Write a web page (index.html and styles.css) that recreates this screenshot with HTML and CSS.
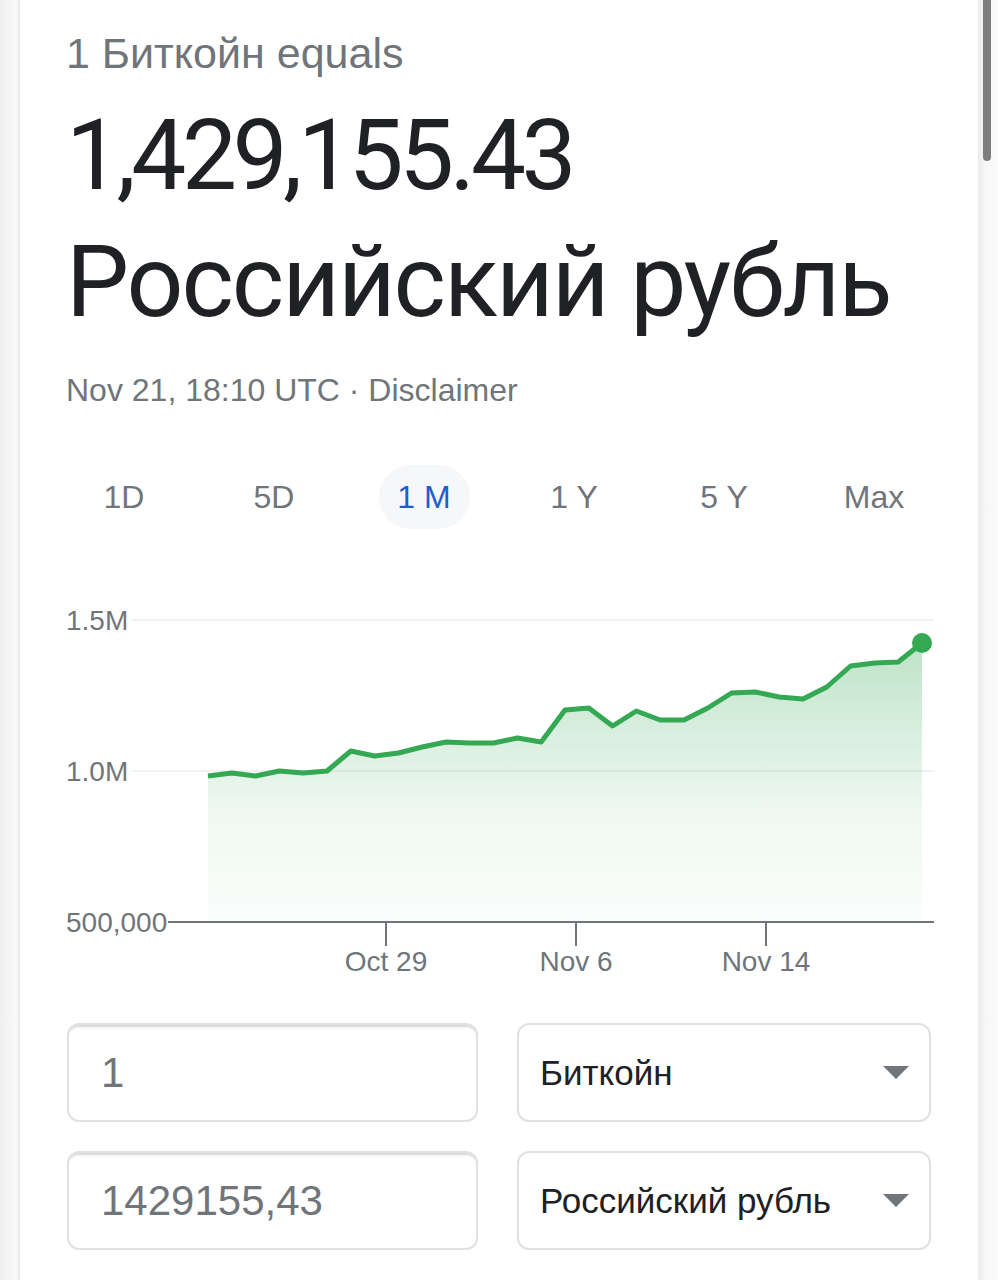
FILE: index.html
```html
<!DOCTYPE html>
<html lang="ru">
<head>
  <meta charset="UTF-8" />
  <meta name="viewport" content="width=device-width, initial-scale=1.0"/>
  <title>Биткойн — Российский рубль</title>
  <link rel="stylesheet" href="styles.css">
</head>
<body>
  <div class="page">
    <div class="gutter-left"></div>

    <div class="card">
      <div class="eyebrow">1 Биткойн equals</div>
      <div class="rate">1,429,155.43</div>
      <div class="currency">Российский рубль</div>
      <div class="meta">Nov 21, 18:10 UTC · Disclaimer</div>

      <div class="tabs">
        <div class="tab"><span>1D</span></div>
        <div class="tab"><span>5D</span></div>
        <div class="tab"><span class="active">1 M</span></div>
        <div class="tab"><span>1 Y</span></div>
        <div class="tab"><span>5 Y</span></div>
        <div class="tab"><span>Max</span></div>
      </div>

      <!-- chart uses page coordinates (viewBox offset by card position) -->
      <svg class="chart" viewBox="20 560 958 440" width="958" height="440">
        <defs>
          <linearGradient id="fill" x1="0" y1="0" x2="0" y2="1">
            <stop offset="0" stop-color="#34a853" stop-opacity="0.32"/>
            <stop offset="0.6" stop-color="#34a853" stop-opacity="0.08"/>
            <stop offset="1" stop-color="#34a853" stop-opacity="0.02"/>
          </linearGradient>
        </defs>
        <g class="grid">
          <line x1="132" y1="620" x2="934" y2="620"/>
          <line x1="132" y1="771" x2="934" y2="771"/>
        </g>
        <path id="area" fill="url(#fill)" d=""/>
        <polyline id="line" class="line" points=""/>
        <circle id="dot" r="10" fill="#34a853" cx="922" cy="643"/>
        <g class="axis">
          <line x1="168" y1="922" x2="934" y2="922"/>
          <line x1="386" y1="922" x2="386" y2="946"/>
          <line x1="576" y1="922" x2="576" y2="946"/>
          <line x1="766" y1="922" x2="766" y2="946"/>
        </g>
        <g class="labels">
          <text x="66" y="630">1.5M</text>
          <text x="66" y="781">1.0M</text>
          <text x="66" y="932">500,000</text>
          <text x="386" y="971" text-anchor="middle">Oct 29</text>
          <text x="576" y="971" text-anchor="middle">Nov 6</text>
          <text x="766" y="971" text-anchor="middle">Nov 14</text>
        </g>
      </svg>

      <div class="converter">
        <div class="field amount">1</div>
        <div class="field select">Биткойн<span class="caret"></span></div>
        <div class="field amount">1429155,43</div>
        <div class="field select">Российский рубль<span class="caret"></span></div>
      </div>
    </div>

    <div class="gutter-right">
      <div class="thumb"></div>
    </div>
  </div>

  <script>
    const values = [776, 773, 776, 771, 773, 771, 751, 756, 753, 747, 742, 743, 743, 738, 742,
                    710, 708, 726, 711, 720, 720, 708, 693, 692, 697, 699, 687, 666, 663, 662, 643];
    const x0 = 208, step = (922 - 208) / (values.length - 1);
    const pts = values.map((y, i) => `${(x0 + i * step).toFixed(1)},${y}`);

    document.getElementById('line').setAttribute('points', pts.join(' '));
    document.getElementById('area').setAttribute('d',
      `M${x0},922 L${pts.join(' L')} L922,922 Z`);
  </script>
</body>
</html>
```

FILE: styles.css
```css
body {
  margin: 0;
  background: #fff;
  font-family: "Liberation Sans", Arial, sans-serif;
}
.page {
  display: flex;
  min-height: 1280px;
  overflow: hidden;
}
.gutter-left {
  width: 20px;
  flex: none;
  background: linear-gradient(to right, #efefef, #fafafa 80%, #e6e6e6);
}
.gutter-right {
  width: 20px;
  flex: none;
  background: linear-gradient(to right, #ececec, #f7f7f7 40%, #fbfbfb);
}
.thumb {
  width: 8px;
  height: 161px;
  margin-left: 5px;
  background: #7d7d7d;
  border-radius: 0 0 4px 4px;
}
.card {
  flex: 1;
  min-width: 0;
  padding: 0 46px;
  background: #fff;
}
.eyebrow {
  margin-top: 28px;
  font-size: 43px;
  line-height: 50px;
  color: #70757a;
}
.rate {
  margin-top: 18px;
  font-family: Roboto, "Noto Sans", sans-serif;
  font-size: 98px;
  line-height: 120px;
  letter-spacing: -4.5px;
  color: #202124;
}
.currency {
  margin-top: 4px;
  font-family: Roboto, "Noto Sans", sans-serif;
  font-size: 100px;
  line-height: 124px;
  letter-spacing: -2px;
  color: #202124;
}
.meta {
  margin-top: 26px;
  font-size: 32px;
  line-height: 40px;
  color: #70757a;
}
.tabs {
  display: grid;
  grid-template-columns: repeat(6, 150px);
  margin: 55px 0 0 -17px;
}
.tab {
  display: flex;
  justify-content: center;
}
.tab span {
  display: flex;
  align-items: center;
  justify-content: center;
  min-width: 91px;
  height: 64px;
  border-radius: 32px;
  font-size: 32px;
  color: #70757a;
}
.tab span.active {
  background: #f6f7f8;
  color: #1a5fd0;
}
.chart {
  display: block;
  margin: 31px 0 0 -46px;
}
.grid line {
  stroke: #f1f1f1;
  stroke-width: 2;
}
.line {
  fill: none;
  stroke: #34a853;
  stroke-width: 5;
  stroke-linejoin: round;
}
.axis line {
  stroke: #70757a;
  stroke-width: 2;
}
.labels text {
  font-family: "Liberation Sans", Arial, sans-serif;
  font-size: 28px;
  fill: #70757a;
}
.converter {
  display: grid;
  grid-template-columns: 411px 414px;
  grid-auto-rows: 99px;
  column-gap: 39px;
  row-gap: 29px;
  margin: 23px 0 0 1px;
}
.field {
  box-sizing: border-box;
  display: flex;
  align-items: center;
  border: 2px solid #dfe1e5;
  border-radius: 12px;
}
.amount {
  padding-left: 32px;
  font-size: 42px;
  color: #70757a;
  box-shadow: inset 0 4px 2px -2px #d6d6d6;
}
.select {
  justify-content: space-between;
  padding: 0 20px 0 21px;
  font-size: 35px;
  color: #202124;
}
.caret {
  width: 0;
  height: 0;
  border-left: 13px solid transparent;
  border-right: 13px solid transparent;
  border-top: 13px solid #70757a;
}
```
